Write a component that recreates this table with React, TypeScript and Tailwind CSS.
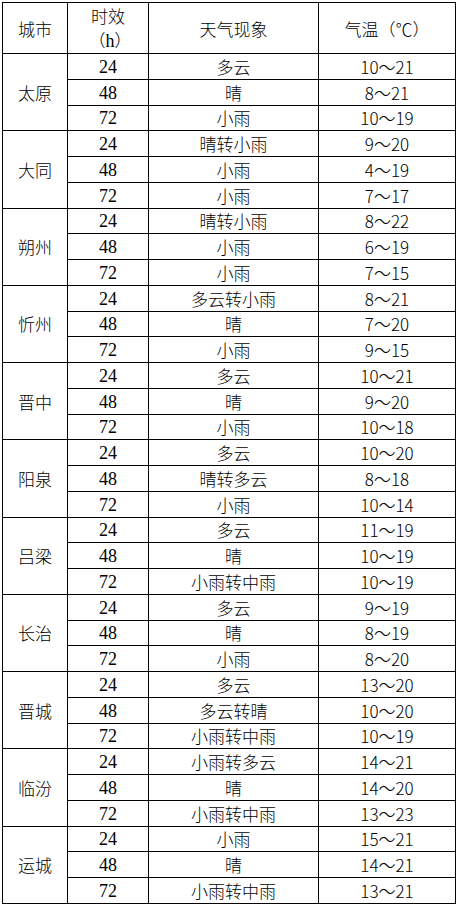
const groups: { city: string; rows: [string, string, string][] }[] = [
  { city: "太原", rows: [["24", "多云", "10～21"], ["48", "晴", "8～21"], ["72", "小雨", "10～19"]] },
  { city: "大同", rows: [["24", "晴转小雨", "9～20"], ["48", "小雨", "4～19"], ["72", "小雨", "7～17"]] },
  { city: "朔州", rows: [["24", "晴转小雨", "8～22"], ["48", "小雨", "6～19"], ["72", "小雨", "7～15"]] },
  { city: "忻州", rows: [["24", "多云转小雨", "8～21"], ["48", "晴", "7～20"], ["72", "小雨", "9～15"]] },
  { city: "晋中", rows: [["24", "多云", "10～21"], ["48", "晴", "9～20"], ["72", "小雨", "10～18"]] },
  { city: "阳泉", rows: [["24", "多云", "10～20"], ["48", "晴转多云", "8～18"], ["72", "小雨", "10～14"]] },
  { city: "吕梁", rows: [["24", "多云", "11～19"], ["48", "晴", "10～19"], ["72", "小雨转中雨", "10～19"]] },
  { city: "长治", rows: [["24", "多云", "9～19"], ["48", "晴", "8～19"], ["72", "小雨", "8～20"]] },
  { city: "晋城", rows: [["24", "多云", "13～20"], ["48", "多云转晴", "10～20"], ["72", "小雨转中雨", "10～19"]] },
  { city: "临汾", rows: [["24", "小雨转多云", "14～21"], ["48", "晴", "14～20"], ["72", "小雨转中雨", "13～23"]] },
  { city: "运城", rows: [["24", "小雨", "15～21"], ["48", "晴", "14～21"], ["72", "小雨转中雨", "13～21"]] },
];

const cell = "border border-black text-center align-middle p-0";

export default function App() {
  return (
    <div className="bg-white w-[458px] h-[906px] pt-[2px] pl-[2px] font-['Noto_Sans_CJK_SC',sans-serif] font-light text-[17px] text-black leading-none">
      <table className="table-fixed border-collapse w-[453px]">
        <colgroup>
          <col className="w-[65px]" />
          <col className="w-[81px]" />
          <col className="w-[170px]" />
          <col className="w-[137px]" />
        </colgroup>
        <thead>
          <tr className="h-[51px]">
            <th className={`${cell} font-light`}>城市</th>
            <th className={`${cell} font-light`}>
              <div className="leading-[24px]">时效</div>
              <div className="leading-[24px] pl-[4px]">
                （<span className="font-['Liberation_Serif',serif] font-normal text-[18px]">h</span>）
              </div>
            </th>
            <th className={`${cell} font-light`}>天气现象</th>
            <th className={`${cell} font-light`}>气温（℃）</th>
          </tr>
        </thead>
        <tbody>
          {groups.map((g) =>
            g.rows.map(([hours, weather, temp], i) => (
              <tr key={g.city + hours} className="h-[25.76px]">
                {i === 0 && (
                  <td rowSpan={3} className={cell}>
                    {g.city}
                  </td>
                )}
                <td className={`${cell} font-['Liberation_Serif',serif] font-normal text-[18px] pt-[1px]`}>
                  {hours}
                </td>
                <td className={cell}>{weather}</td>
                <td className={cell}>{temp}</td>
              </tr>
            ))
          )}
        </tbody>
      </table>
    </div>
  );
}
